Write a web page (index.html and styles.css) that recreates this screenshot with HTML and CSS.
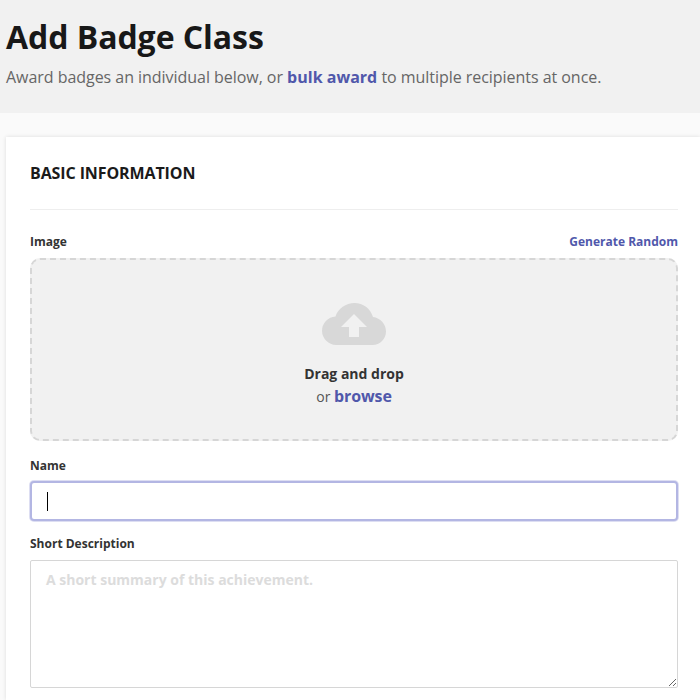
FILE: index.html
```html
<!DOCTYPE html>
<html lang="en">
<head>
<meta charset="utf-8">
<title>Add Badge Class</title>
<link rel="stylesheet" href="styles.css">
</head>
<body>
<header class="hero">
  <h1 class="hero-title">Add Badge Class</h1>
  <p class="hero-sub">Award badges an individual below, or <a class="link bulk" href="#">bulk award</a> to multiple recipients at once.</p>
</header>
<main class="card">
  <h2 class="card-title">BASIC INFORMATION</h2>
  <div class="label-row">
    <span class="label">Image</span>
    <a class="random" href="#">Generate Random</a>
  </div>
  <div class="drop">
    <svg class="cloud" width="64" height="42" viewBox="0 0 64 42" aria-hidden="true">
      <path fill="#d8d8d8" d="M14 42A14.500 14.500 0 0 1 0 28A14.500 14.500 0 0 1 13.500 13.500C16 5.500 24 0 32.500 0C41 0 48.500 5.500 51 14C58.500 15 64 21 64 28.500C64 36 58 42 50.500 42Z"/>
      <path fill="#f1f1f1" d="M32 11L45 24H37V34H27V24H19Z"/>
    </svg>
    <div class="drop-main">Drag and drop</div>
    <div class="drop-alt">or <a class="link browse" href="#">browse</a></div>
  </div>
  <label class="label label-block label-name" for="name">Name</label>
  <div class="name-wrap">
    <input class="name-input" id="name" type="text">
    <span class="caret"></span>
  </div>
  <label class="label label-block label-desc" for="desc">Short Description</label>
  <textarea class="desc-input" id="desc" placeholder="A short summary of this achievement."></textarea>
</main>
</body>
</html>
```
FILE: styles.css
```css
* { box-sizing: border-box; }
html, body { margin: 0; height: 700px; overflow: hidden; }
body { background: #fafafa; font-family: "Open Sans", sans-serif; color: #1a1a1a; }
.hero { background: #f1f1f1; height: 113px; padding: 15px 6px 0; }
.hero-title { margin: 0; font-size: 32px; line-height: 44px; font-weight: 700; color: #181818; letter-spacing: -0.05px; }
.hero-sub { margin: 5px 0 0; font-size: 16px; line-height: 26px; color: #666; letter-spacing: -0.04px; }
.link { color: #5058ab; font-weight: 700; text-decoration: none; }
.bulk { letter-spacing: 0.02px; }
.card { margin: 24px 0 0 6px; background: #fff; box-shadow: 0 0 4px rgba(0,0,0,.12); padding: 24px 22px 0 24px; height: 563px; }
.card-title { margin: 0; height: 49px; border-bottom: 1px solid #eee; font-size: 16px; line-height: 24px; font-weight: 700; color: #1a1a1a; letter-spacing: -0.1px; }
.label-row { display: flex; justify-content: space-between; align-items: flex-start; margin-top: 23px; height: 18px; }
.label { font-size: 12px; line-height: 18px; font-weight: 700; color: #333; }
.label-block { display: block; }
.random { font-size: 12px; line-height: 18px; font-weight: 700; color: #5058ab; text-decoration: none; }
.drop { margin-top: 7px; height: 183px; border: 2px dashed #d6d6d6; border-radius: 10px; background: #f1f1f1; display: flex; flex-direction: column; align-items: center; padding-top: 43px; }
.cloud { display: block; }
.drop-main { margin-top: 18px; font-size: 14px; line-height: 22px; font-weight: 700; color: #333; }
.drop-alt { font-size: 14px; line-height: 23px; color: #555; }
.browse { font-size: 16px; letter-spacing: -0.1px; }
.label-name { margin-top: 16px; }
.name-wrap { position: relative; margin-top: 6px; }
.name-input { display: block; width: 100%; height: 40px; border: 2px solid #b3b6e3; border-radius: 4px; background: #fff; outline: none; box-shadow: 0 0 0 1px rgba(179,182,227,.45); padding: 0 15px; font: 16px "Open Sans", sans-serif; }
.caret { position: absolute; left: 17px; top: 11px; width: 1px; height: 19px; background: #000; }
.label-desc { margin-top: 14px; }
.desc-input { display: block; width: 100%; height: 128px; margin-top: 7px; border: 1px solid #d6d6d6; border-radius: 2px; background: #fff; outline: none; padding: 8px 15px; font: 700 14px/22px "Open Sans", sans-serif; }
.desc-input::placeholder { color: #dcdcdc; opacity: 1; }
```
